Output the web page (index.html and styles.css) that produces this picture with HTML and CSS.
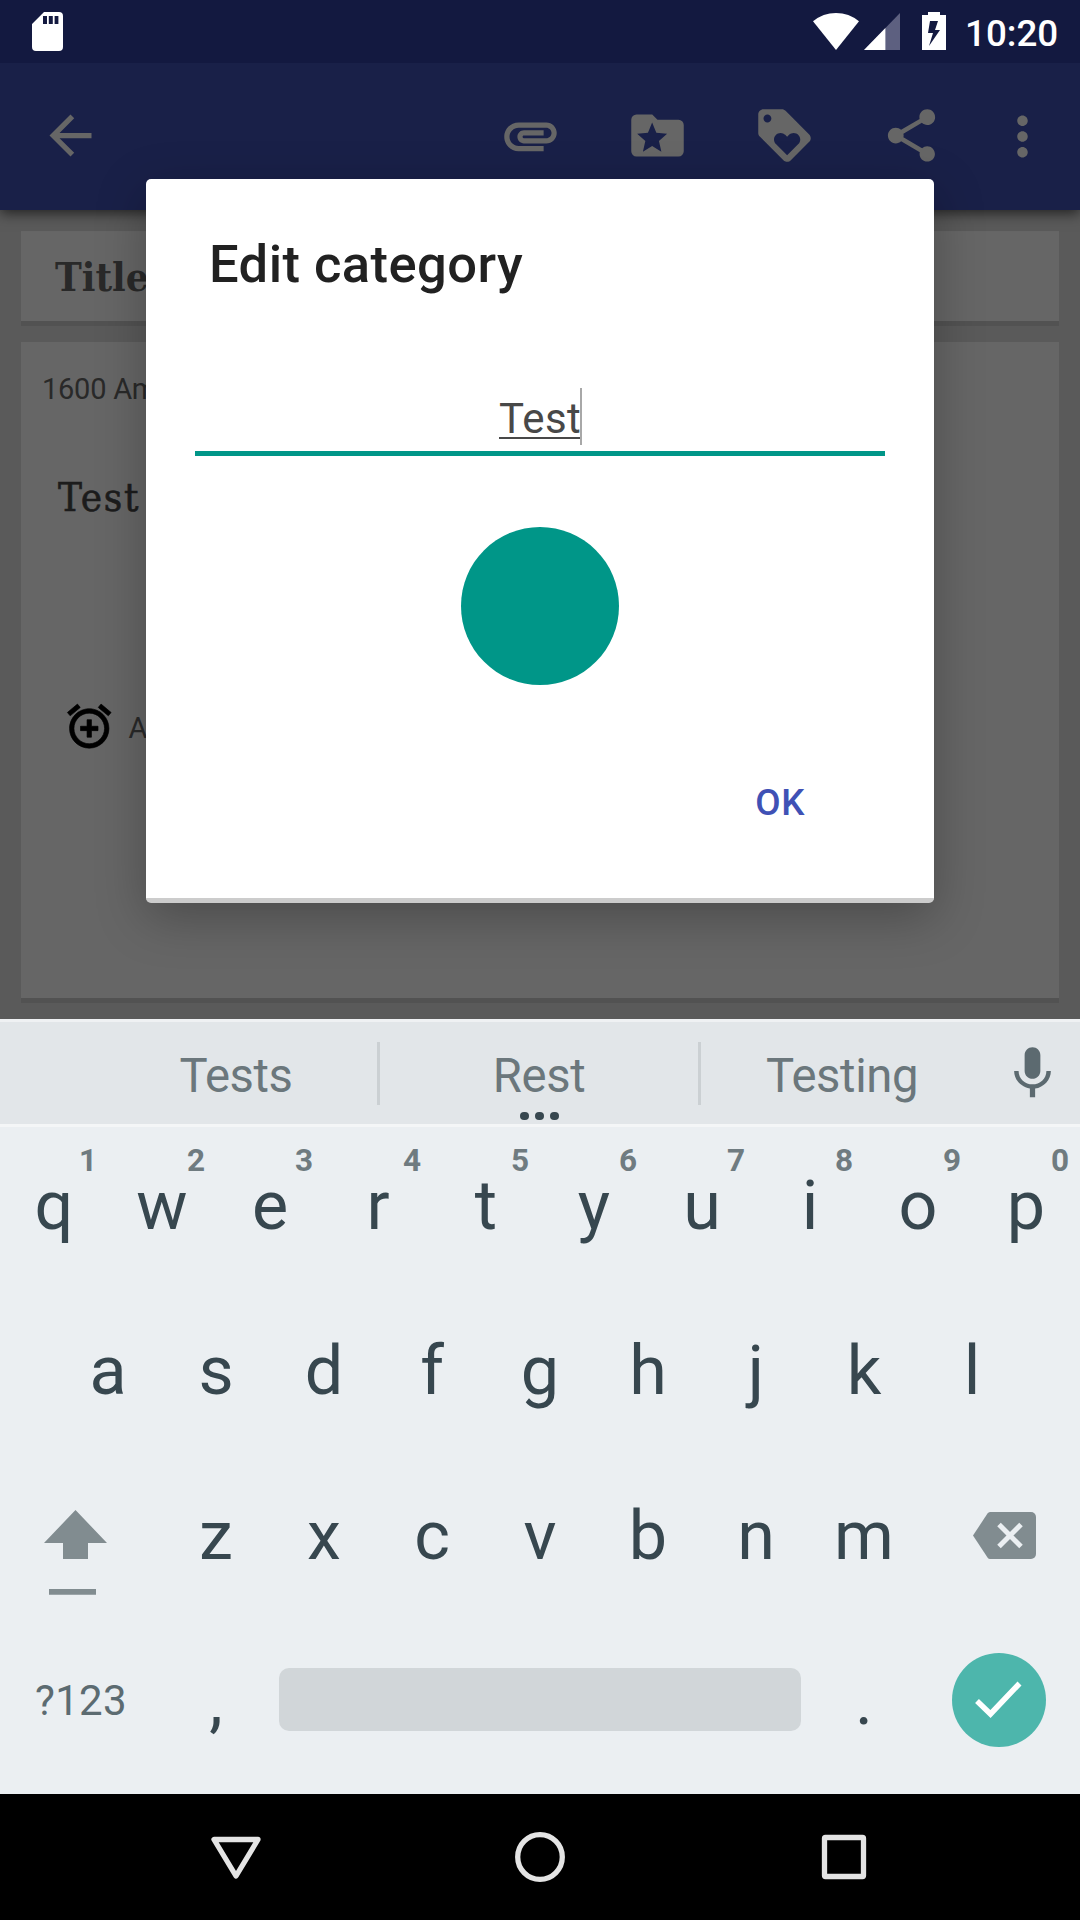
FILE: index.html
```html
<!DOCTYPE html>
<html lang="en">
<head>
<meta charset="utf-8">
<title>Edit category</title>
<link rel="stylesheet" href="styles.css">
</head>
<body>
<div class="screen">
  <header class="status-bar">
    <svg class="sd" width="31" height="39" viewBox="0 0 31 39"><path fill="#fff" fill-rule="evenodd" d="M12 0H27a4 4 0 0 1 4 4V35a4 4 0 0 1-4 4H4a4 4 0 0 1-4-4V12ZM11 4V12H15V4ZM16.8 4V12H20.8V4ZM22.6 4V12H26.4V4Z"/></svg>
    <svg class="wifi" width="46" height="37" viewBox="0 0 46 37"><path fill="#fff" d="M23 37 0 8.300Q10 0 23 0T46 8.300Z"/></svg>
    <svg class="signal" width="36" height="37" viewBox="0 0 37 37" preserveAspectRatio="none"><path fill="#5d6080" d="M37 0V37H0Z"/><path fill="#fff" d="M0 37H22V15Z"/></svg>
    <svg class="battery" width="24" height="38" viewBox="0 0 24 38"><path fill="#fff" fill-rule="evenodd" d="M6 0H18V3H24V38H0V3H6ZM8 9 6 21H11L7 34 18 18H13L16 9Z"/></svg>
    <span class="clock">10:20</span>
  </header>

  <nav class="toolbar">
    <svg class="icon back" viewBox="0 0 24 24"><path d="M20 11H7.830l5.590-5.590L12 4l-8 8 8 8 1.410-1.410L7.830 13H20v-2z"/></svg>
    <svg class="icon" viewBox="0 0 24 24"><path d="M2 12.500C2 9.460 4.460 7 7.500 7H18c2.210 0 4 1.790 4 4s-1.790 4-4 4H9.500C8.120 15 7 13.880 7 12.500S8.120 10 9.500 10H17v2H9.410c-.55 0-.55 1 0 1H18c1.100 0 2-.9 2-2s-.9-2-2-2H7.500C5.570 9 4 10.570 4 12.500S5.570 16 7.500 16H17v2H7.500C4.460 18 2 15.540 2 12.500z"/></svg>
    <svg class="icon" viewBox="0 0 24 24"><path fill-rule="evenodd" d="M20 6h-8l-2-2H4a2 2 0 0 0-2 2v12a2 2 0 0 0 2 2h16a2 2 0 0 0 2-2V8a2 2 0 0 0-2-2zM9.960 15.980 13.480 18.170 12.550 14.050 15.660 11.290 11.560 10.930 9.960 7.050 8.360 10.930 4.260 11.290 7.370 14.050 6.440 18.170z"/></svg>
    <svg class="icon" viewBox="0 0 24 24"><path d="M21.410 11.580l-9-9C12.050 2.220 11.550 2 11 2H4c-1.100 0-2 .9-2 2v7c0 .55.22 1.050.59 1.420l9 9c.36.36.86.58 1.410.58.55 0 1.050-.22 1.410-.59l7-7c.37-.36.59-.86.59-1.410 0-.55-.23-1.060-.59-1.420zM5.500 7C4.670 7 4 6.330 4 5.500S4.670 4 5.500 4 7 4.670 7 5.500 6.330 7 5.500 7zm11.770 8.270L13 19.540l-4.270-4.270C8.280 14.810 8 14.190 8 13.500c0-1.380 1.120-2.500 2.500-2.500.69 0 1.320.28 1.770.74l.73.72.73-.73c.45-.45 1.080-.73 1.770-.73 1.380 0 2.500 1.120 2.500 2.500 0 .69-.28 1.320-.73 1.770z"/></svg>
    <svg class="icon" viewBox="0 0 24 24"><path d="M18 16.080c-.76 0-1.440.3-1.960.77L8.910 12.700c.05-.23.09-.46.09-.7s-.04-.47-.09-.7l7.050-4.110c.54.5 1.250.81 2.040.81 1.660 0 3-1.340 3-3s-1.340-3-3-3-3 1.340-3 3c0 .24.04.47.09.7L8.040 9.810C7.500 9.310 6.790 9 6 9c-1.660 0-3 1.340-3 3s1.340 3 3 3c.79 0 1.500-.31 2.040-.81l7.120 4.160c-.05.21-.08.43-.08.65 0 1.610 1.310 2.920 2.920 2.920s2.920-1.310 2.920-2.920-1.310-2.920-2.920-2.920z"/></svg>
    <svg class="icon more" viewBox="0 0 24 24"><path d="M12 8c1.100 0 2-.9 2-2s-.9-2-2-2-2 .9-2 2 .9 2 2 2zm0 2c-1.100 0-2 .9-2 2s.9 2 2 2 2-.9 2-2-.9-2-2-2zm0 6c-1.100 0-2 .9-2 2s.9 2 2 2 2-.9 2-2-.9-2-2-2z"/></svg>
  </nav>

  <main class="note">
    <section class="card title-card">Title</section>
    <section class="card body-card">
      <div class="address">1600 Am</div>
      <div class="content">Test</div>
      <div class="reminder">
        <svg width="52.5" height="52.5" viewBox="0 0 24 24"><path d="M7.880 3.390L6.600 1.860 2 5.710l1.290 1.530 4.590-3.850zM22 5.720l-4.600-3.860-1.290 1.530 4.600 3.860L22 5.720zM12 4c-4.970 0-9 4.030-9 9s4.020 9 9 9c4.970 0 9-4.030 9-9s-4.030-9-9-9zm0 16c-3.870 0-7-3.130-7-7s3.130-7 7-7 7 3.130 7 7-3.130 7-7 7zm1-11h-2v3H8v2h3v3h2v-3h3v-2h-3V9z" stroke="#000" stroke-width=".3"/></svg>
        <span>A</span>
      </div>
    </section>
  </main>

  <section class="keyboard">
    <div class="suggestions">
      <span class="suggestion first">Tests</span>
      <i class="divider"></i>
      <span class="suggestion main">Rest<span class="dots"><i></i><i></i><i></i></span></span>
      <i class="divider"></i>
      <span class="suggestion last">Testing</span>
      <svg class="mic" width="63" height="63" viewBox="0 0 24 24"><path fill="#5c6a70" d="M12 14c1.660 0 2.990-1.340 2.990-3L15 5c0-1.660-1.340-3-3-3S9 3.340 9 5v6c0 1.660 1.340 3 3 3zm5.300-3c0 3-2.540 5.100-5.300 5.100S6.700 14 6.700 11H5c0 3.410 2.720 6.230 6 6.720V21h2v-3.280c3.280-.48 6-3.300 6-6.720h-1.700z"/></svg>
    </div>
    <div class="rows">
      <div class="row"><span class="key">q<sup>1</sup></span><span class="key">w<sup>2</sup></span><span class="key">e<sup>3</sup></span><span class="key">r<sup>4</sup></span><span class="key">t<sup>5</sup></span><span class="key">y<sup>6</sup></span><span class="key">u<sup>7</sup></span><span class="key">i<sup>8</sup></span><span class="key">o<sup>9</sup></span><span class="key">p<sup>0</sup></span></div>
      <div class="row"><span class="key">a</span><span class="key">s</span><span class="key">d</span><span class="key">f</span><span class="key">g</span><span class="key">h</span><span class="key">j</span><span class="key">k</span><span class="key">l</span></div>
      <div class="row">
        <span class="key wide"><svg class="shift" width="64" height="86" viewBox="0 0 64 86"><path fill="#818c90" d="M31.500 0 63 33H44V49H19V33H0ZM5 79H52V84.700H5Z"/></svg></span>
        <span class="key">z</span><span class="key">x</span><span class="key">c</span><span class="key">v</span><span class="key">b</span><span class="key">n</span><span class="key">m</span>
        <span class="key wide"><svg class="delete" width="63" height="47" viewBox="0 0 63 47"><path fill="#818c90" d="M17 0H58a5 5 0 0 1 5 5V42a5 5 0 0 1-5 5H17Q15.500 47 14.500 45.500L0 23.500 14.500 1.500Q15.500 0 17 0Z"/><path d="M26 12.500 48 34.500M48 12.500 26 34.500" stroke="#ebeff2" stroke-width="5" fill="none"/></svg></span>
      </div>
      <div class="row">
        <span class="key wide symbols">?123</span>
        <span class="key">,</span>
        <span class="key space"><i></i></span>
        <span class="key">.</span>
        <span class="key wide"><span class="enter"><svg width="48" height="38" viewBox="0 0 48 38"><path d="M2 20 15.500 33 44.500 2.500" fill="none" stroke="#fff" stroke-width="5.500"/></svg></span></span>
      </div>
    </div>
  </section>

  <footer class="nav-bar">
    <svg width="50" height="50" viewBox="0 0 50 50"><path d="M3 7.500H47L25 44Z" /></svg>
    <svg width="50" height="50" viewBox="0 0 50 50"><circle cx="25" cy="25" r="22.300"/></svg>
    <svg width="50" height="50" viewBox="0 0 50 50"><rect x="5.500" y="5.500" width="39" height="39" rx="1"/></svg>
  </footer>

  <div class="dialog">
    <h1>Edit category</h1>
    <div class="field"><span class="value">Test<i class="caret"></i></span></div>
    <div class="swatch"></div>
    <div class="actions">OK</div>
  </div>
</div>
</body>
</html>
```
FILE: styles.css
```css
* { box-sizing: border-box; }
body { margin: 0; font-family: Roboto, "Liberation Sans", sans-serif; }
svg { display: block; flex: none; }
.screen {
  position: relative;
  width: 1080px;
  height: 1920px;
  overflow: hidden;
  display: flex;
  flex-direction: column;
  background: #5a5a5a;
}

.status-bar {
  position: relative;
  z-index: 1;
  height: 63px;
  flex: none;
  display: flex;
  align-items: flex-start;
  padding: 12px 22px 0 32px;
  background: #131940;
}
.status-bar .wifi { margin: 1px 5px 0 auto; }
.status-bar .signal { margin: 1px 22px 0 0; }
.clock {
  margin-left: 19px;
  width: 93px;
  font-size: 36.75px;
  font-weight: 500;
  line-height: 43px;
  color: #fff;
}

.toolbar {
  position: relative;
  height: 147px;
  flex: none;
  display: flex;
  gap: 64px;
  align-items: flex-start;
  padding: 41px 26px 0 39px;
  background: #192048;
  box-shadow: 0 3px 13px rgba(0, 0, 0, .65);
}
.icon { width: 63px; height: 63px; fill: #666; }
.icon.back { margin-right: auto; }
.icon.more { margin-left: -16px; margin-top: 1px; }

.note {
  height: 809px;
  flex: none;
  display: flex;
  flex-direction: column;
  gap: 16px;
  padding: 21px 21px 16px;
}
.card { background: #666; border-bottom: 5px solid #525252; }
.title-card {
  height: 95px;
  padding-left: 34px;
  font: bold 40px/92px "DejaVu Serif Condensed", "DejaVu Serif", serif;
  color: #292929;
}
.body-card { flex: 1; padding: 30px 0 0 21px; }
.address { font-size: 29px; line-height: 34px; letter-spacing: -.25px; color: #292929; }
.content {
  margin: 67px 0 0 16px;
  font: 40px/48px "DejaVu Serif Condensed", "DejaVu Serif", serif;
  letter-spacing: 1.8px;
  -webkit-text-stroke: .6px #1c1c1c;
  color: #1c1c1c;
}
.reminder {
  display: flex;
  align-items: center;
  gap: 13px;
  margin: 179px 0 0 21px;
  font-size: 29px;
  color: #292929;
}
.reminder span { padding-top: 3px; }

.keyboard {
  position: relative;
  height: 775px;
  flex: none;
  background: #ebeff2;
  color: #37474f;
}
.suggestions {
  height: 108px;
  display: flex;
  align-items: center;
  background: #e2e6e9;
  border-top: 3px solid #eff1f3;
  border-bottom: 3px solid #f4f6f7;
}
.suggestion { font-size: 47.25px; line-height: 60px; letter-spacing: -.4px; text-align: center; color: #6b777c; padding-top: 6px; }
.suggestion.first { width: 282px; margin-left: 95px; }
.suggestion.main { width: 318px; position: relative; }
.suggestion.last { width: 282px; }
.divider { width: 3px; height: 63px; background: #cbd0d3; }
.dots { position: absolute; left: 140px; bottom: -14px; display: flex; gap: 6.5px; }
.dots i { width: 8.500px; height: 8.500px; border-radius: 50%; background: #37474f; }
.mic { margin-left: 18px; }

.rows { display: flex; flex-direction: column; gap: 8px; }
.row { height: 157px; display: flex; justify-content: center; }
.key {
  position: relative;
  width: 108px;
  display: flex;
  align-items: center;
  justify-content: center;
  font-size: 68.25px;
  line-height: 80px;
}
.key sup { position: absolute; right: 11px; top: 18px; font-size: 31.5px; line-height: 32px; font-weight: 700; color: #6f7b80; }
.key.wide { width: 162px; }
.shift { margin: 34px 0 0 -11px; }
.delete { margin-left: 11px; }
.symbols { font-size: 42px; letter-spacing: .3px; color: #5c6b71; }
.key.space { width: 540px; }
.space i { width: 522px; height: 63px; margin-bottom: 2px; border-radius: 10px; background: #d1d6d9; }
.enter {
  width: 94px;
  height: 94px;
  margin-bottom: 2px;
  border-radius: 50%;
  background: #4db6ac;
  display: flex;
  align-items: center;
  justify-content: center;
}

.nav-bar {
  height: 126px;
  flex: none;
  display: flex;
  justify-content: center;
  align-items: center;
  gap: 254px;
  background: #000;
}
.nav-bar svg { fill: none; stroke: #e4e4e4; stroke-width: 5.300; stroke-linejoin: round; }

.dialog {
  position: absolute;
  z-index: 2;
  left: 146px;
  top: 179px;
  width: 788px;
  height: 724px;
  display: flex;
  flex-direction: column;
  align-items: center;
  background: #fff;
  border-bottom: 5px solid #ccc;
  border-radius: 5px;
  box-shadow: 0 14px 50px rgba(0, 0, 0, .27);
}
.dialog h1 {
  align-self: stretch;
  margin: 54px 0 0 63px;
  font-size: 52.5px;
  line-height: 62px;
  letter-spacing: .45px;
  font-weight: 500;
  color: #212121;
}
.field {
  width: 690px;
  height: 68px;
  margin-top: 93px;
  border-bottom: 5px solid #009688;
  text-align: center;
  font-size: 42px;
  color: #484848;
}
.value { display: inline-block; position: relative; height: 51px; line-height: 62px; letter-spacing: .3px; border-bottom: 2px solid #484848; }
.caret { position: absolute; right: -1px; top: 0; width: 2px; height: 57px; background: #a8a8a8; }
.swatch { width: 158px; height: 158px; margin-top: 71px; border-radius: 50%; background: #009688; }
.actions {
  align-self: flex-end;
  margin: 96px 129px 0 0;
  font-size: 36.75px;
  line-height: 44px;
  letter-spacing: .6px;
  font-weight: 500;
  color: #3f51b5;
}
```
